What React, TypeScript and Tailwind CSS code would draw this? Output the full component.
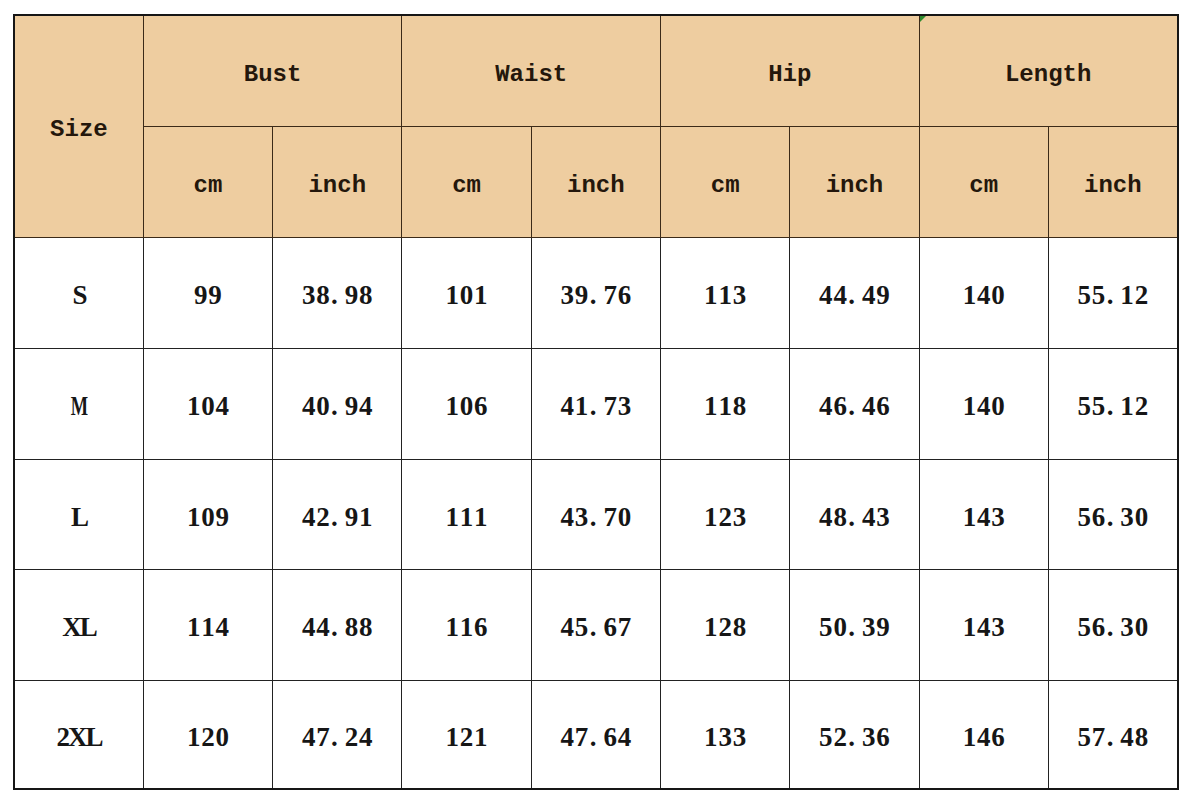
import React from "react";

const rows = [
  ["S", "99", "38.98", "101", "39.76", "113", "44.49", "140", "55.12"],
  ["M", "104", "40.94", "106", "41.73", "118", "46.46", "140", "55.12"],
  ["L", "109", "42.91", "111", "43.70", "123", "48.43", "143", "56.30"],
  ["XL", "114", "44.88", "116", "45.67", "128", "50.39", "143", "56.30"],
  ["2XL", "120", "47.24", "121", "47.64", "133", "52.36", "146", "57.48"],
];

const heights = ["h-[111px]", "h-[111px]", "h-[110px]", "h-[111px]", "h-[109px]"];

function Num({ v }: { v: string }) {
  return (
    <span className="inline-flex justify-center">
      {v.split("").map((c, i) => (
        <span
          key={i}
          className={`inline-flex w-[14.3px] ${c === "." ? "justify-start pl-[1px]" : "justify-center"}`}
        >
          {c}
        </span>
      ))}
    </span>
  );
}

function SizeLabel({ v }: { v: string }) {
  return (
    <span className="tracking-[-2px]">
      {v.split("").map((c, i) =>
        c === "M" ? (
          <span key={i} className="inline-block scale-x-[0.68]">
            {c}
          </span>
        ) : (
          <span key={i}>{c}</span>
        )
      )}
    </span>
  );
}

const serif = { fontFamily: '"Liberation Serif", "Times New Roman", serif' };
const mono = { fontFamily: '"Liberation Mono", "DejaVu Sans Mono", monospace' };
const head =
  "border border-[#3b2a18] bg-[#EECDA0] text-[#24170c] font-bold text-[24px] text-center align-middle pt-[8px] leading-none";
const cell =
  "border border-[#222] text-center align-middle font-bold text-[27px] text-[#161616] bg-white pt-[6px] leading-none";

export default function App() {
  return (
    <div className="w-[1187px] h-[800px] bg-white pt-[14px] pl-[13px]" style={serif}>
      <table className="table-fixed border-collapse w-[1164px] border-[2.5px] border-[#161616]">
        <colgroup>
          {Array.from({ length: 9 }).map((_, i) => (
            <col key={i} className="w-[129.3px]" />
          ))}
        </colgroup>
        <thead style={mono}>
          <tr className="h-[111px]">
            <th rowSpan={2} className={head}>Size</th>
            <th colSpan={2} className={head}>Bust</th>
            <th colSpan={2} className={head}>Waist</th>
            <th colSpan={2} className={head}>Hip</th>
            <th colSpan={2} className={`${head} relative`}>
              <span className="absolute left-0 top-0 w-0 h-0 border-t-[6px] border-r-[6px] border-t-[#2e8b2e] border-r-transparent" />
              Length
            </th>
          </tr>
          <tr className="h-[111px]">
            {Array.from({ length: 4 }).map((_, i) => (
              <React.Fragment key={i}>
                <th className={head}>cm</th>
                <th className={head}>inch</th>
              </React.Fragment>
            ))}
          </tr>
        </thead>
        <tbody>
          {rows.map((r, ri) => (
            <tr key={ri} className={heights[ri]}>
              {r.map((v, ci) => (
                <td key={ci} className={cell}>
                  {ci === 0 ? <SizeLabel v={v} /> : <Num v={v} />}
                </td>
              ))}
            </tr>
          ))}
        </tbody>
      </table>
    </div>
  );
}
